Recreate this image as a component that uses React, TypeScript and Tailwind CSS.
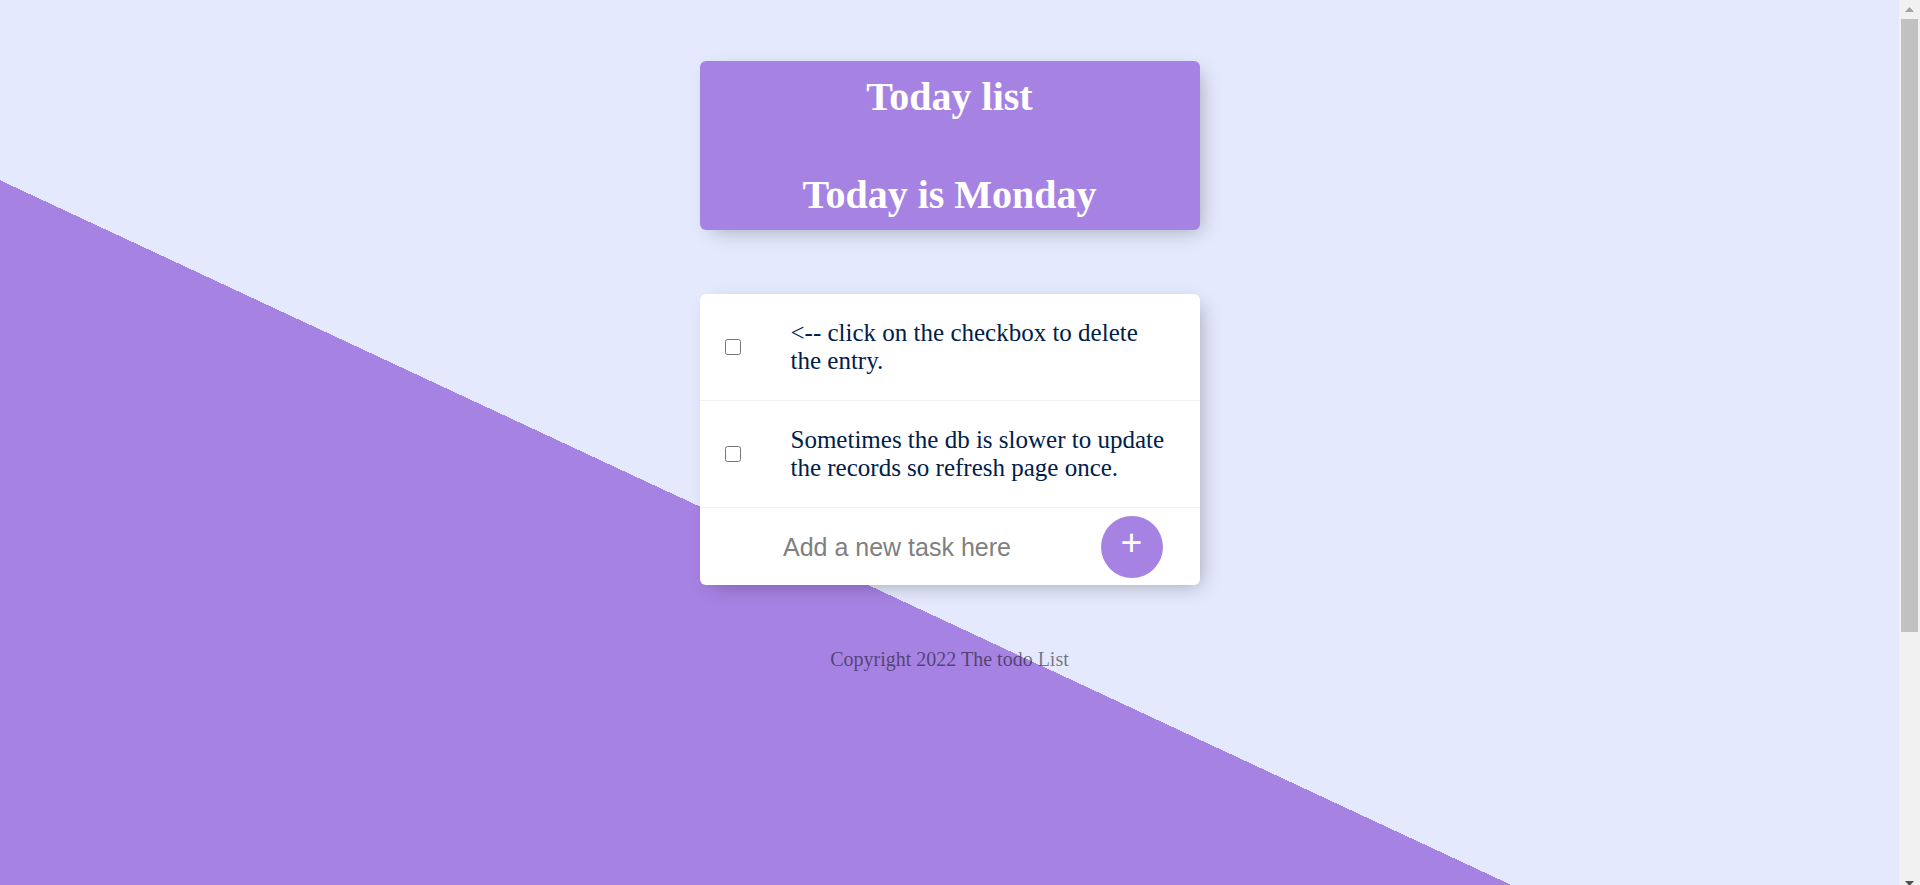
import { useState } from "react";

const initialItems = [
  { id: 1, text: "<-- click on the checkbox to delete the entry." },
  { id: 2, text: "Sometimes the db is slower to update the records so refresh page once." },
];

// window-style scrollbar strip on the right edge
function Scrollbar() {
  return (
    <div className="flex h-[893px] w-[21px] shrink-0 flex-col bg-[#f1f1f1]">
      <div className="flex h-[19px] items-center justify-center">
        <svg width="9" height="5" viewBox="0 0 9 5">
          <polygon points="4.5,0 9,5 0,5" fill="#a3a3a3" />
        </svg>
      </div>
      <div className="mx-[2px] h-[613px] bg-[#c1c1c1]" />
      <div className="flex-1" />
      <div className="flex h-[19px] items-center justify-center">
        <svg width="9" height="5" viewBox="0 0 9 5">
          <polygon points="0,0 9,0 4.5,5" fill="#505050" />
        </svg>
      </div>
    </div>
  );
}

export default function App() {
  const [items, setItems] = useState(initialItems);
  const [newItem, setNewItem] = useState("");

  const removeItem = (id: number) => setItems(items.filter((i) => i.id !== id));

  const addItem = (e: React.FormEvent) => {
    e.preventDefault();
    if (!newItem.trim()) return;
    setItems([...items, { id: Date.now(), text: newItem }]);
    setNewItem("");
  };

  return (
    <div className="flex h-[885px] overflow-hidden">
      <main className="h-[885px] flex-1 overflow-y-auto [scrollbar-width:none]">
        <div className="min-h-[1246px] bg-[linear-gradient(25deg,#A683E3_50%,#E4E9FD_50%)] pt-[61px] font-['Liberation_Serif',serif]">
          {/* HEADING */}
          <div className="mx-auto flex w-[500px] flex-col rounded-[6px] bg-[#A683E3] text-center shadow-[6px_6px_19px_-6px_rgba(0,0,0,0.3)]">
            <h1 className="p-[12.5px] text-[40px] font-bold leading-[46px] text-white">Today list</h1>
            <h1 className="mt-[27px] p-[12.5px] text-[40px] font-bold leading-[46px] text-white">Today is Monday</h1>
          </div>

          {/* LIST */}
          <div className="mx-auto mt-16 w-[500px] rounded-[6px] bg-white shadow-[6px_6px_19px_-6px_rgba(0,0,0,0.3)]">
            {items.map((item) => (
              <div key={item.id} className="flex min-h-[87px] items-center border-b border-[#F1F1F1]">
                <input
                  type="checkbox"
                  onChange={() => removeItem(item.id)}
                  className="m-[25px] h-4 w-4 shrink-0"
                />
                <p className="p-[25px] text-[25px] leading-[28px] text-[#00204a]">{item.text}</p>
              </div>
            ))}
            <form onSubmit={addItem} className="flex h-[77px] items-center">
              <input
                type="text"
                value={newItem}
                onChange={(e) => setNewItem(e.target.value)}
                placeholder="Add a new task here"
                autoComplete="off"
                className="ml-[25px] h-[75px] w-[345px] pt-[2px] text-center font-['Liberation_Sans',sans-serif] text-[25px] text-black outline-none placeholder:text-[grey] focus:shadow-[inset_0_-4px_0_0_#A683E3]"
              />
              <button
                type="submit"
                className="ml-[31px] flex h-[62px] w-[62px] items-center justify-center rounded-full bg-[#A683E3] pb-[7px] font-['Liberation_Sans',sans-serif] text-[37.5px] leading-none text-white"
              >
                +
              </button>
            </form>
          </div>

          <footer className="mt-[63px] text-center text-[20px] leading-[23px] text-black/50">
            Copyright 2022 The todo List
          </footer>
        </div>
      </main>
      <Scrollbar />
    </div>
  );
}
